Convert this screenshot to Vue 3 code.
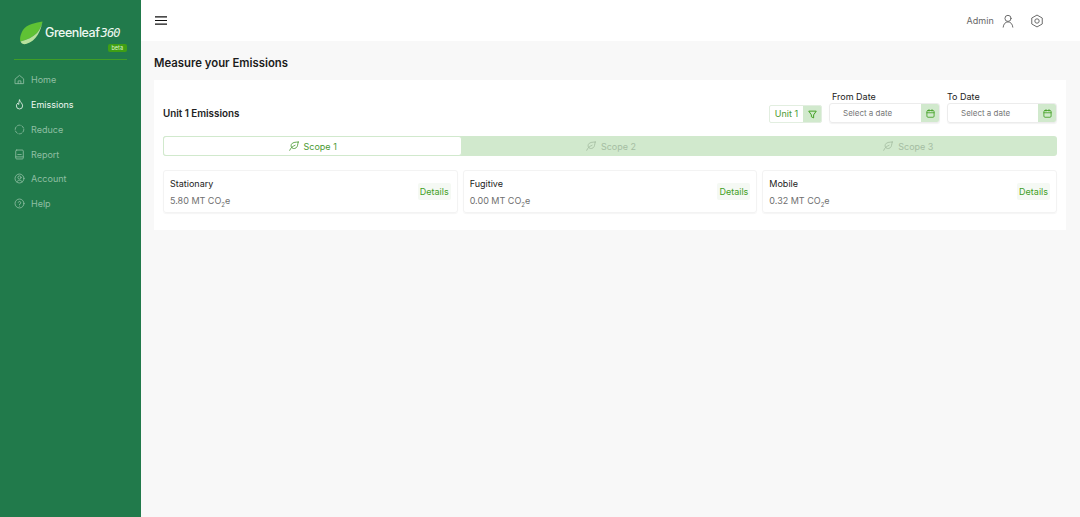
<script setup>
const nav = [
  { label: 'Home', icon: 'home' },
  { label: 'Emissions', icon: 'flame', active: true },
  { label: 'Reduce', icon: 'reduce' },
  { label: 'Report', icon: 'report' },
  { label: 'Account', icon: 'account' },
  { label: 'Help', icon: 'help' }
]
const scopes = [
  { label: 'Scope 1', active: true },
  { label: 'Scope 2' },
  { label: 'Scope 3' }
]
const cards = [
  { name: 'Stationary', value: '5.80' },
  { name: 'Fugitive', value: '0.00' },
  { name: 'Mobile', value: '0.32' }
]
const dates = ['From Date', 'To Date']
</script>

<template>
  <div class="app">
    <aside class="side">
      <div class="brand">
        <div class="logo">
          <svg class="leaf" viewBox="0 0 24 24" width="24" height="24">
            <path d="M23.500 .5C17 2 8 3 4 9 1.500 13 .5 18 1.500 20.500 8 19 14 16 18 12 21 8 22.500 5 23.500 .5Z" fill="#5fc234" />
            <path d="M23.500 .5C22 9 18 20 7 23 4.500 23.500 2 22.500 1.500 20.500 8 19 14 16 18 12 21 8 22.500 5 23.500 .5Z" fill="#b7e29d" />
          </svg>
          <span class="word">Greenleaf</span><span class="num">360</span>
        </div>
        <span class="beta">beta</span>
      </div>
      <nav class="nav">
        <a v-for="n in nav" :key="n.label" class="item" :class="{ on: n.active }">
          <svg class="ico" viewBox="0 0 16 16" width="11" height="11" fill="none" stroke="currentColor" stroke-width="1.200" stroke-linecap="round" stroke-linejoin="round">
            <template v-if="n.icon === 'home'"><path d="M2 7 8 2l6 5v7H2Z" /><path d="M6 14v-4h4v4" /></template>
            <template v-else-if="n.icon === 'flame'"><path d="M8 1.500c.5 3 4.500 4.500 4.500 8.500a4.500 4.500 0 0 1-9 0c0-2 1-3 2-4 .3 1.200.8 1.700 1.500 2C7 6 7 3.500 8 1.500Z" /></template>
            <template v-else-if="n.icon === 'reduce'"><circle cx="8" cy="8" r="6.300" stroke-dasharray="4 2.500" /></template>
            <template v-else-if="n.icon === 'report'"><rect x="2.500" y="1.500" width="11" height="13" rx="1.500" /><path d="M5.500 8h5M2.500 11.500h11" /></template>
            <template v-else-if="n.icon === 'account'"><circle cx="8" cy="8" r="6.500" /><circle cx="8" cy="6.500" r="2.300" /><path d="M4 13c1-2 2.500-2.500 4-2.500s3 .5 4 2.500" /></template>
            <template v-else><circle cx="8" cy="8" r="6.500" /><path d="M6.200 6.300A1.900 1.900 0 1 1 8 8.800v.7M8 11.800v.1" /></template>
          </svg>
          <span>{{ n.label }}</span>
        </a>
      </nav>
    </aside>
    <div class="main">
      <header class="top">
        <svg class="burger" viewBox="0 0 12 9" width="12" height="9" fill="none" stroke="#111" stroke-width="1.200"><path d="M0 .8h12M0 4.500h12M0 8.200h12" /></svg>
        <div class="top-right">
          <span class="admin">Admin</span>
          <svg viewBox="0 0 16 16" width="14" height="14" fill="none" stroke="#666" stroke-width="1.100" stroke-linecap="round"><circle cx="8" cy="5" r="3.500" /><path d="M2.500 15c.3-3.500 2.500-6 5.500-6s5.200 2.500 5.500 6" /></svg>
          <svg class="gear" viewBox="0 0 16 16" width="14" height="14" fill="none" stroke="#666" stroke-width="1.100" stroke-linejoin="round"><path d="M8 1.200 14 4.600v6.800l-6 3.400-6-3.400V4.600Z" /><circle cx="8" cy="8" r="2.500" /></svg>
        </div>
      </header>
      <main class="content">
        <h1 class="title">Measure your Emissions</h1>
        <section class="panel">
          <div class="head">
            <h2 class="unit-title">Unit 1 Emissions</h2>
            <div class="controls">
              <div class="select">
                <span class="sel-text">Unit 1</span>
                <span class="addon">
                  <svg viewBox="0 0 12 12" width="9" height="9" fill="none" stroke="#3f9f1f" stroke-width="1.300" stroke-linejoin="round"><path d="M1 1.500h10L7.500 6.500v4l-3-1.500V6.500Z" /></svg>
                </span>
              </div>
              <label v-for="(d, i) in dates" :key="d" class="date" :class="{ to: i === 1 }">
                <span class="date-label">{{ d }}</span>
                <span class="date-box">
                  <span class="placeholder">Select a date</span>
                  <span class="addon cal">
                    <svg viewBox="0 0 12 12" width="9" height="9" fill="none" stroke="#3f9f1f" stroke-width="1.100" stroke-linecap="round"><rect x="1.200" y="2" width="9.600" height="9" rx="1.500" /><path d="M1.200 5h9.600M4 .8v2M8 .8v2" /></svg>
                  </span>
                </span>
              </label>
            </div>
          </div>
          <div class="tabs">
            <div v-for="s in scopes" :key="s.label" class="tab" :class="{ active: s.active }">
              <svg viewBox="0 0 14 14" width="10" height="10" fill="none" stroke="currentColor" stroke-width="1.200" stroke-linecap="round" stroke-linejoin="round"><path d="M13 1.500C9 1.500 4.500 1.800 3.200 5 2.300 7.500 3.500 10 6 10.500c3 .5 5.500-1.500 6-4.500.2-1.500.6-3 1-4.500Z" /><path d="M1 13c1.500-3.500 4-5.500 7.500-7" /></svg>
              <span>{{ s.label }}</span>
            </div>
          </div>
          <div class="cards">
            <article v-for="c in cards" :key="c.name" class="card">
              <div>
                <div class="card-name">{{ c.name }}</div>
                <div class="card-val">{{ c.value }} MT CO<sub>2</sub>e</div>
              </div>
              <button class="details">Details</button>
            </article>
          </div>
        </section>
      </main>
    </div>
  </div>
</template>

<style>
html, body { margin: 0; padding: 0; }
</style>

<style scoped>
.app { display: flex; width: 1080px; height: 517px; overflow: hidden; font-family: Inter, "Liberation Sans", sans-serif; color: #222; }
.side { width: 141px; flex: none; background: #217a4b; box-sizing: border-box; padding: 20px 14px 0; }
.brand { border-bottom: 1px solid #3f9e26; height: 39px; position: relative; }
.logo { display: flex; align-items: center; padding-left: 5px; height: 25px; }
.leaf { flex: none; margin-right: 2px; }
.word { color: #eef8f1; font-size: 12.500px; font-weight: 500; letter-spacing: -0.450px; }
.num { color: #eef8f1; font: italic 400 12px "DejaVu Sans Mono", monospace; margin-left: 1px; letter-spacing: -0.900px; }
.beta { position: absolute; right: 0; top: 24px; background: #3f9f14; color: #dff3d3; font-size: 5.500px; line-height: 8px; padding: 0 4px; border-radius: 2px; }
.nav { display: flex; flex-direction: column; padding-top: 7.500px; }
.item { display: flex; align-items: center; height: 24.750px; gap: 6px; font-size: 9px; color: #8fbfa3; }
.item.on { color: #eef7f1; }
.ico { flex: none; }
.main { flex: 1; min-width: 0; background: #f8f8f8; display: flex; flex-direction: column; }
.top { height: 41px; flex: none; background: #fff; display: flex; align-items: center; justify-content: space-between; padding: 0 36px 0 14px; box-sizing: border-box; }
.burger { flex: none; }
.top-right { display: flex; align-items: center; gap: 7px; }
.admin { font-size: 9px; color: #666; letter-spacing: .1px; }
.gear { margin-left: 8px; }
.content { padding: 14px 14px 0 13px; }
.title { margin: 0 0 10px; font-size: 11.350px; font-weight: 600; line-height: 16px; color: #1c1c1c; height: 15px; }
.panel { background: #fff; height: 150px; box-sizing: border-box; padding: 11px 9px 0; }
.head { display: flex; justify-content: space-between; align-items: flex-end; height: 32px; }
.unit-title { margin: 0; font-size: 9.800px; font-weight: 600; line-height: 23px; height: 21px; color: #222; }
.controls { display: flex; align-items: flex-end; }
.select { display: flex; width: 53px; height: 18px; box-sizing: border-box; border: 1px solid #e2eee0; border-radius: 2px; margin-right: 7px; overflow: hidden; }
.sel-text { flex: 1; font-size: 9px; line-height: 16px; text-align: center; color: #4a9a32; }
.addon { display: flex; align-items: center; justify-content: center; width: 18px; background: #d1e9cd; flex: none; }
.date { display: block; width: 111px; margin-right: 7px; }
.date.to { margin-right: 0; width: 110px; }
.date-label { display: block; font-size: 9px; line-height: 12px; padding-left: 3px; color: #222; }
.date.to .date-label { padding-left: 0; }
.date-box { display: flex; height: 20px; box-sizing: border-box; border: 1px solid #ececec; border-radius: 3px; overflow: hidden; box-shadow: 0 1px 1px rgba(0, 0, 0, .05); }
.placeholder { flex: 1; font-size: 8px; line-height: 18px; color: #777; padding-left: 13px; }
.cal { height: 100%; }
.tabs { display: flex; height: 20px; margin-top: 13px; background: #d1e9cd; border-radius: 3px; }
.tab { flex: 1; display: flex; align-items: center; justify-content: center; gap: 5px; font-size: 9px; color: #a5bda2; box-sizing: border-box; }
.tab.active { background: #fff; color: #4a9a32; border: 1px solid #d1e9cd; border-radius: 3px; }
.cards { display: flex; gap: 5px; margin-top: 14px; }
.card { flex: 1; height: 43px; box-sizing: border-box; display: flex; justify-content: space-between; align-items: center; padding: 0 6px; border: 1px solid #f3f3f3; border-radius: 3px; box-shadow: 0 1px 1px rgba(0, 0, 0, .04); }
.card-name { font-size: 9px; line-height: 14px; color: #222; margin-top: 2px; }
.card-val { font-size: 9px; line-height: 16px; color: #6f6f6f; margin-top: 2px; }
.card-val sub { font-size: 6px; line-height: 0; }
.details { border: 0; background: #f5f9f4; color: #3f9f1f; font: 9px Inter, sans-serif; padding: 0 2px; height: 17px; border-radius: 2px; }
</style>
